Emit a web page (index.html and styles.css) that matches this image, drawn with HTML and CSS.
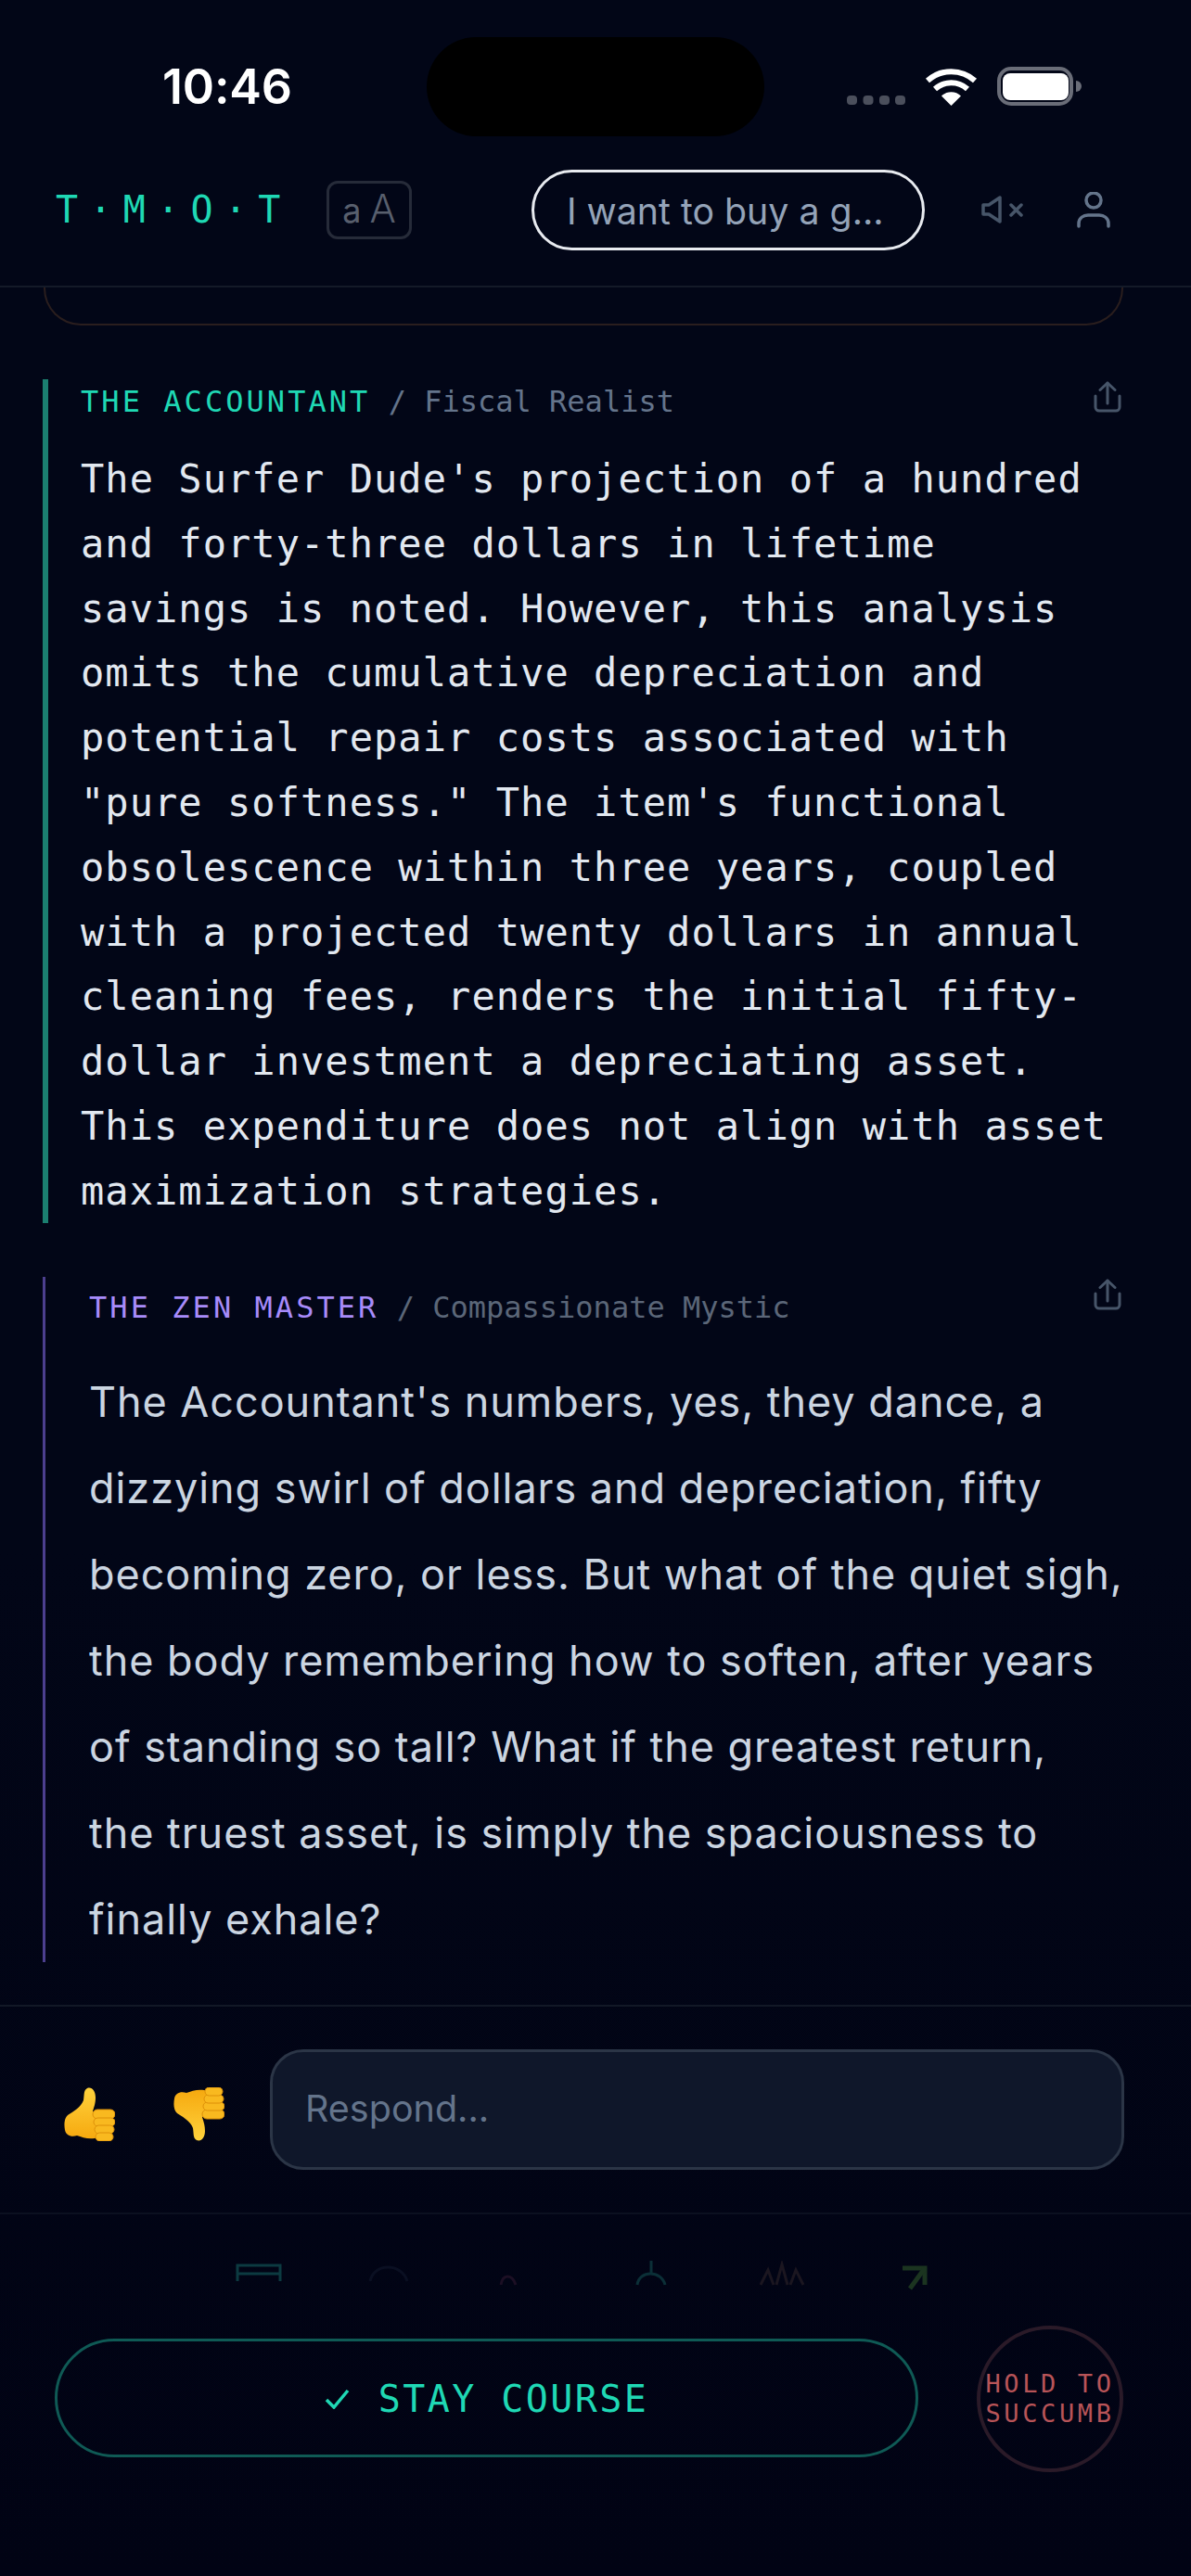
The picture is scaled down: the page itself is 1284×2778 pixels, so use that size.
FILE: index.html
```html
<!DOCTYPE html>
<html lang="en">
<head>
    <meta charset="UTF-8">
    <meta name="viewport" content="width=device-width, initial-scale=1.0">
    <title>TMOT</title>
    <link rel="stylesheet" href="styles.css">
</head>
<body>
    <div class="pantalla">
        <div class="statusBar">
            <span class="hora">10:46</span>
            <div class="isla"></div>
            <div class="statusIconos">
                <svg class="puntos" width="63" height="10" viewBox="0 0 63 10"><rect x="0" width="11" height="10" rx="4"/><rect x="17.500" width="11" height="10" rx="4"/><rect x="35" width="11" height="10" rx="4"/><rect x="52" width="11" height="10" rx="4"/></svg>
                <svg width="57" height="42" viewBox="0 0 57 42" fill="none" stroke="#fff" stroke-width="6"><path d="M3 15A38 38 0 0 1 54 15"/><path d="M11 24A26 26 0 0 1 46 24"/><path d="M28.500 42L18 31.500A15 15 0 0 1 39 31.500Z" fill="#fff" stroke="none"/></svg>
                <svg width="91" height="42" viewBox="0 0 91 42"><rect x="2" y="2" width="78" height="38" rx="13" fill="none" stroke="#6a6d78" stroke-width="4"/><rect x="6" y="7" width="71" height="29" rx="8" fill="#fff"/><path d="M85 15a6 6 0 0 1 6 6a6 6 0 0 1-6 6Z" fill="#6a6d78"/></svg>
            </div>
        </div>

        <header class="cabecera">
            <span class="logo">T·M·O·T</span>
            <button class="btnFuente"><span class="letraChica">a</span><span class="letraGrande">A</span></button>
            <div class="consulta">I want to buy a g...</div>
            <svg class="icoMute" width="45" height="30" viewBox="0 0 45 30" fill="none" stroke="#475569" stroke-width="3.500" stroke-linejoin="round" stroke-linecap="round"><path d="M2 10H8L20 2V28L8 20H2Z"/><path d="M32 10L43 21M43 10L32 21"/></svg>
            <svg class="icoUsuario" width="36" height="39" viewBox="0 0 36 39" fill="none" stroke="#64748b" stroke-width="3.500" stroke-linecap="round"><circle cx="18" cy="9" r="8"/><path d="M2 37V34C2 28 7 25 12 25H24C29 25 34 28 34 34V37"/></svg>
        </header>

        <main class="hilo">
            <div class="tarjetaAnterior"></div>

            <article class="mensaje contador">
                <div class="mensajeCabeza">
                    <div><span class="nombre">THE ACCOUNTANT</span> <span class="rol">/ Fiscal Realist</span></div>
                    <svg class="compartir" width="30" height="34" viewBox="0 0 30 34" fill="none" stroke="#475569" stroke-width="3" stroke-linecap="round" stroke-linejoin="round"><path d="M15 2V24"/><path d="M7 9.500L15 2L23 9.500"/><path d="M2 16V28a4 4 0 0 0 4 4H24a4 4 0 0 0 4-4V16"/></svg>
                </div>
                <p class="texto">The Surfer Dude's projection of a hundred and forty-three dollars in lifetime savings is noted. However, this analysis omits the cumulative depreciation and potential repair costs associated with "pure softness." The item's functional obsolescence within three years, coupled with a projected twenty dollars in annual cleaning fees, renders the initial fifty-dollar investment a depreciating asset. This expenditure does not align with asset maximization strategies.</p>
            </article>

            <article class="mensaje zen">
                <div class="mensajeCabeza">
                    <div><span class="nombre">THE ZEN MASTER</span> <span class="rol">/ Compassionate Mystic</span></div>
                    <svg class="compartir" width="30" height="34" viewBox="0 0 30 34" fill="none" stroke="#475569" stroke-width="3" stroke-linecap="round" stroke-linejoin="round"><path d="M15 2V24"/><path d="M7 9.500L15 2L23 9.500"/><path d="M2 16V28a4 4 0 0 0 4 4H24a4 4 0 0 0 4-4V16"/></svg>
                </div>
                <p class="texto">The Accountant's numbers, yes, they dance, a dizzying swirl of dollars and depreciation, fifty becoming zero, or less. But what of the quiet sigh, the body remembering how to soften, after years of standing so tall? What if the greatest return, the truest asset, is simply the spaciousness to finally exhale?</p>
            </article>
        </main>

        <section class="respuesta">
            <svg class="pulgar" width="55" height="58" viewBox="0 0 55 58">
                <defs><linearGradient id="amarillo" x1="0" y1="0" x2="0" y2="1"><stop offset="0" stop-color="#ffd23c"/><stop offset="1" stop-color="#f6a90f"/></linearGradient></defs>
                <path d="M4 30C10 26 18 22 21 14C22 8 21 3 25 1C30-1 34 4 34 11C34 18 32 22 31 26L37 30V54C28 57 20 54 14 52C8 54 2 52 1 46C0 40 0 34 4 30Z" fill="url(#amarillo)"/>
                <g fill="#f9b91f" stroke="#dd8f08" stroke-width="1"><rect x="31" y="24" width="24" height="10" rx="5"/><rect x="32" y="33" width="23" height="9" rx="4.500"/><rect x="33" y="41" width="21" height="9" rx="4.500"/><rect x="34" y="49" width="19" height="9" rx="4.500"/></g>
            </svg>
            <svg class="pulgar abajo" width="55" height="58" viewBox="0 0 55 58">
                <path d="M4 30C10 26 18 22 21 14C22 8 21 3 25 1C30-1 34 4 34 11C34 18 32 22 31 26L37 30V54C28 57 20 54 14 52C8 54 2 52 1 46C0 40 0 34 4 30Z" fill="url(#amarillo)"/>
                <g fill="#f9b91f" stroke="#dd8f08" stroke-width="1"><rect x="31" y="24" width="24" height="10" rx="5"/><rect x="32" y="33" width="23" height="9" rx="4.500"/><rect x="33" y="41" width="21" height="9" rx="4.500"/><rect x="34" y="49" width="19" height="9" rx="4.500"/></g>
            </svg>
            <input class="campo" type="text" placeholder="Respond...">
        </section>

        <div class="tiposFila">
            <svg width="50" height="40" viewBox="0 0 50 40" fill="none" stroke="#0c3a41" stroke-width="3"><path d="M2 22V5H48V22"/><path d="M2 14H48"/></svg>
            <svg width="50" height="40" viewBox="0 0 50 40" fill="none" stroke="#0a0f22" stroke-width="3"><path d="M4 22C8 2 38 2 44 22"/></svg>
            <svg width="50" height="40" viewBox="0 0 50 40" fill="none" stroke="#1c0f24" stroke-width="3"><path d="M4 26C6 14 16 14 20 26"/></svg>
            <svg width="50" height="40" viewBox="0 0 50 40" fill="none" stroke="#0b2f37" stroke-width="3"><path d="M25 0V14"/><path d="M10 26C12 10 36 10 40 26"/></svg>
            <svg width="50" height="40" viewBox="0 0 50 40" fill="none" stroke="#1b1620" stroke-width="3"><path d="M2 26L10 10L16 26M19 26L25 4L31 26M34 26L40 10L48 26"/></svg>
            <svg width="50" height="40" viewBox="0 0 50 40" fill="none" stroke="#1b3420" stroke-width="5"><path d="M14 8H38V26"/><path d="M38 8L22 30"/></svg>
        </div>

        <footer class="acciones">
            <button class="btnCurso">
                <svg class="check" width="27" height="22" viewBox="0 0 27 22" fill="none" stroke="#1fd8b4" stroke-width="3.500"><path d="M2 12L10 20L25 2"/></svg>
                <span>STAY COURSE</span>
            </button>
            <button class="btnSucumbir">HOLD TO<br>SUCCUMB</button>
        </footer>
    </div>
</body>
</html>
```
FILE: styles.css
```css
body {
    margin: 0;
    background-color: #020617;
}
.pantalla {
    width: 1284px;
    height: 2778px;
    display: flex;
    flex-direction: column;
    overflow: hidden;
    position: relative;
    background: linear-gradient(#020617 60%, #010314);
    font-family: "Inter", "Liberation Sans", sans-serif;
}

/* barra de estado */
.statusBar {
    height: 150px;
    flex: none;
    box-sizing: border-box;
    display: flex;
    justify-content: space-between;
    align-items: flex-start;
    padding: 72px 118px 0 175px;
}
.hora {
    color: #fff;
    font-size: 52px;
    line-height: 44px;
    font-weight: 600;
    letter-spacing: -0.200px;
}
.isla {
    position: absolute;
    left: 460px;
    top: 40px;
    width: 364px;
    height: 107px;
    border-radius: 54px;
    background-color: #000;
}
.statusIconos {
    display: flex;
    align-items: flex-end;
    gap: 21px;
}
.puntos {
    margin-bottom: 1px;
    fill: #4b4f5c;
}

/* cabecera */
.cabecera {
    height: 160px;
    flex: none;
    box-sizing: border-box;
    display: flex;
    align-items: center;
    padding: 0 0 6px 60px;
    border-bottom: 2px solid #141a28;
}
.logo {
    width: 292px;
    color: #1fd8b4;
    font-family: "DejaVu Sans Mono", monospace;
    font-size: 40px;
    letter-spacing: 12.300px;
}
.btnFuente {
    width: 92px;
    height: 63px;
    box-sizing: border-box;
    display: flex;
    align-items: baseline;
    justify-content: center;
    gap: 9px;
    padding: 0;
    line-height: 54px;
    background: none;
    border: 3px solid #262b39;
    border-radius: 12px;
    color: #585f6d;
    font-family: "Inter", sans-serif;
}
.letraChica {
    font-size: 36px;
}
.letraGrande {
    font-size: 42px;
    font-weight: 300;
}
.consulta {
    width: 424px;
    height: 87px;
    box-sizing: border-box;
    margin-left: 129px;
    padding-left: 35px;
    line-height: 83px;
    border: 3px solid #e8ebf0;
    border-radius: 44px;
    color: #94a3b8;
    font-size: 39.300px;
    white-space: nowrap;
}
.icoMute {
    margin-left: 61px;
}
.icoUsuario {
    margin-left: 58px;
}

/* mensajes */
.hilo {
    flex: none;
    height: 1852px;
    box-sizing: border-box;
    padding: 0 73px 0 46px;
    overflow: hidden;
}
.tarjetaAnterior {
    height: 39px;
    margin: 0 0 58px 1px;
    border: 2px solid #2a1e1e;
    border-top: none;
    border-radius: 0 0 40px 40px;
}
.mensaje {
    box-sizing: border-box;
}
.mensajeCabeza {
    display: flex;
    justify-content: space-between;
    align-items: flex-start;
    font-family: "DejaVu Sans Mono", monospace;
    font-size: 32px;
    line-height: 40px;
}
.nombre {
    letter-spacing: 3.050px;
}
.rol {
    color: #64748b;
}
.compartir {
    flex: none;
    margin: 2px 2px 0 0;
}
.texto {
    margin: 0;
}
.contador {
    padding-left: 35px;
    border-left: 6px solid #1b7f70;
    height: 910px;
    margin-bottom: 58px;
}
.contador .nombre {
    color: #1fd8b4;
}
.contador .mensajeCabeza > div {
    padding-top: 4px;
}
.contador .texto {
    margin-top: 29px;
    color: #e2e8f0;
    font-family: "DejaVu Sans Mono", monospace;
    font-size: 42px;
    letter-spacing: 1.050px;
    line-height: 69.800px;
}
.zen {
    padding-left: 47px;
    border-left: 3px solid #4c3f8f;
    height: 739px;
}
.zen .nombre {
    color: #a78bfa;
}
.zen .rol {
    color: #5b6678;
}
.zen .mensajeCabeza > div {
    padding-top: 13px;
}
.zen .texto {
    margin-top: 35px;
    color: #cbd5e1;
    font-size: 45px;
    letter-spacing: 0.950px;
    line-height: 93px;
}

/* respuesta */
.respuesta {
    height: 226px;
    flex: none;
    box-sizing: border-box;
    display: flex;
    align-items: center;
    padding: 0 72px 0 69px;
    border-top: 2px solid #121826;
    border-bottom: 2px solid #0b1020;
}
.pulgar {
    flex: none;
    margin-top: 10px;
}
.abajo {
    margin-left: 63px;
    transform: scaleY(-1);
}
.campo {
    flex: 1;
    height: 130px;
    box-sizing: border-box;
    margin-left: 49px;
    padding: 0 35px 2px;
    background-color: #0f172a;
    border: 3px solid #2b3546;
    border-radius: 36px;
    color: #64748b;
    font-family: "Inter", sans-serif;
    font-size: 39.500px;
}
.campo::placeholder {
    color: #64748b;
    opacity: 1;
}

/* iconos apagados */
.tiposFila {
    height: 120px;
    flex: none;
    box-sizing: border-box;
    display: flex;
    justify-content: space-between;
    padding: 50px 275px 0 254px;
}

/* acciones */
.acciones {
    flex: none;
    height: 270px;
    display: flex;
    align-items: flex-start;
    gap: 63px;
    padding: 0 73px 0 59px;
}
.btnCurso {
    flex: 1;
    height: 128px;
    margin-top: 14px;
    padding: 2px 0 0;
    display: flex;
    align-items: center;
    justify-content: center;
    gap: 31px;
    background: none;
    border: 3px solid #0f5a55;
    border-radius: 64px;
    color: #1fd8b4;
    font-family: "DejaVu Sans Mono", monospace;
    font-size: 40px;
    letter-spacing: 2.400px;
}
.btnSucumbir {
    width: 158px;
    height: 158px;
    flex: none;
    padding: 0;
    background: none;
    border: 4px solid #2a1a28;
    border-radius: 50%;
    color: #b85458;
    font-family: "DejaVu Sans Mono", monospace;
    font-size: 27px;
    line-height: 32px;
    letter-spacing: 3.600px;
    white-space: nowrap;
}
```
